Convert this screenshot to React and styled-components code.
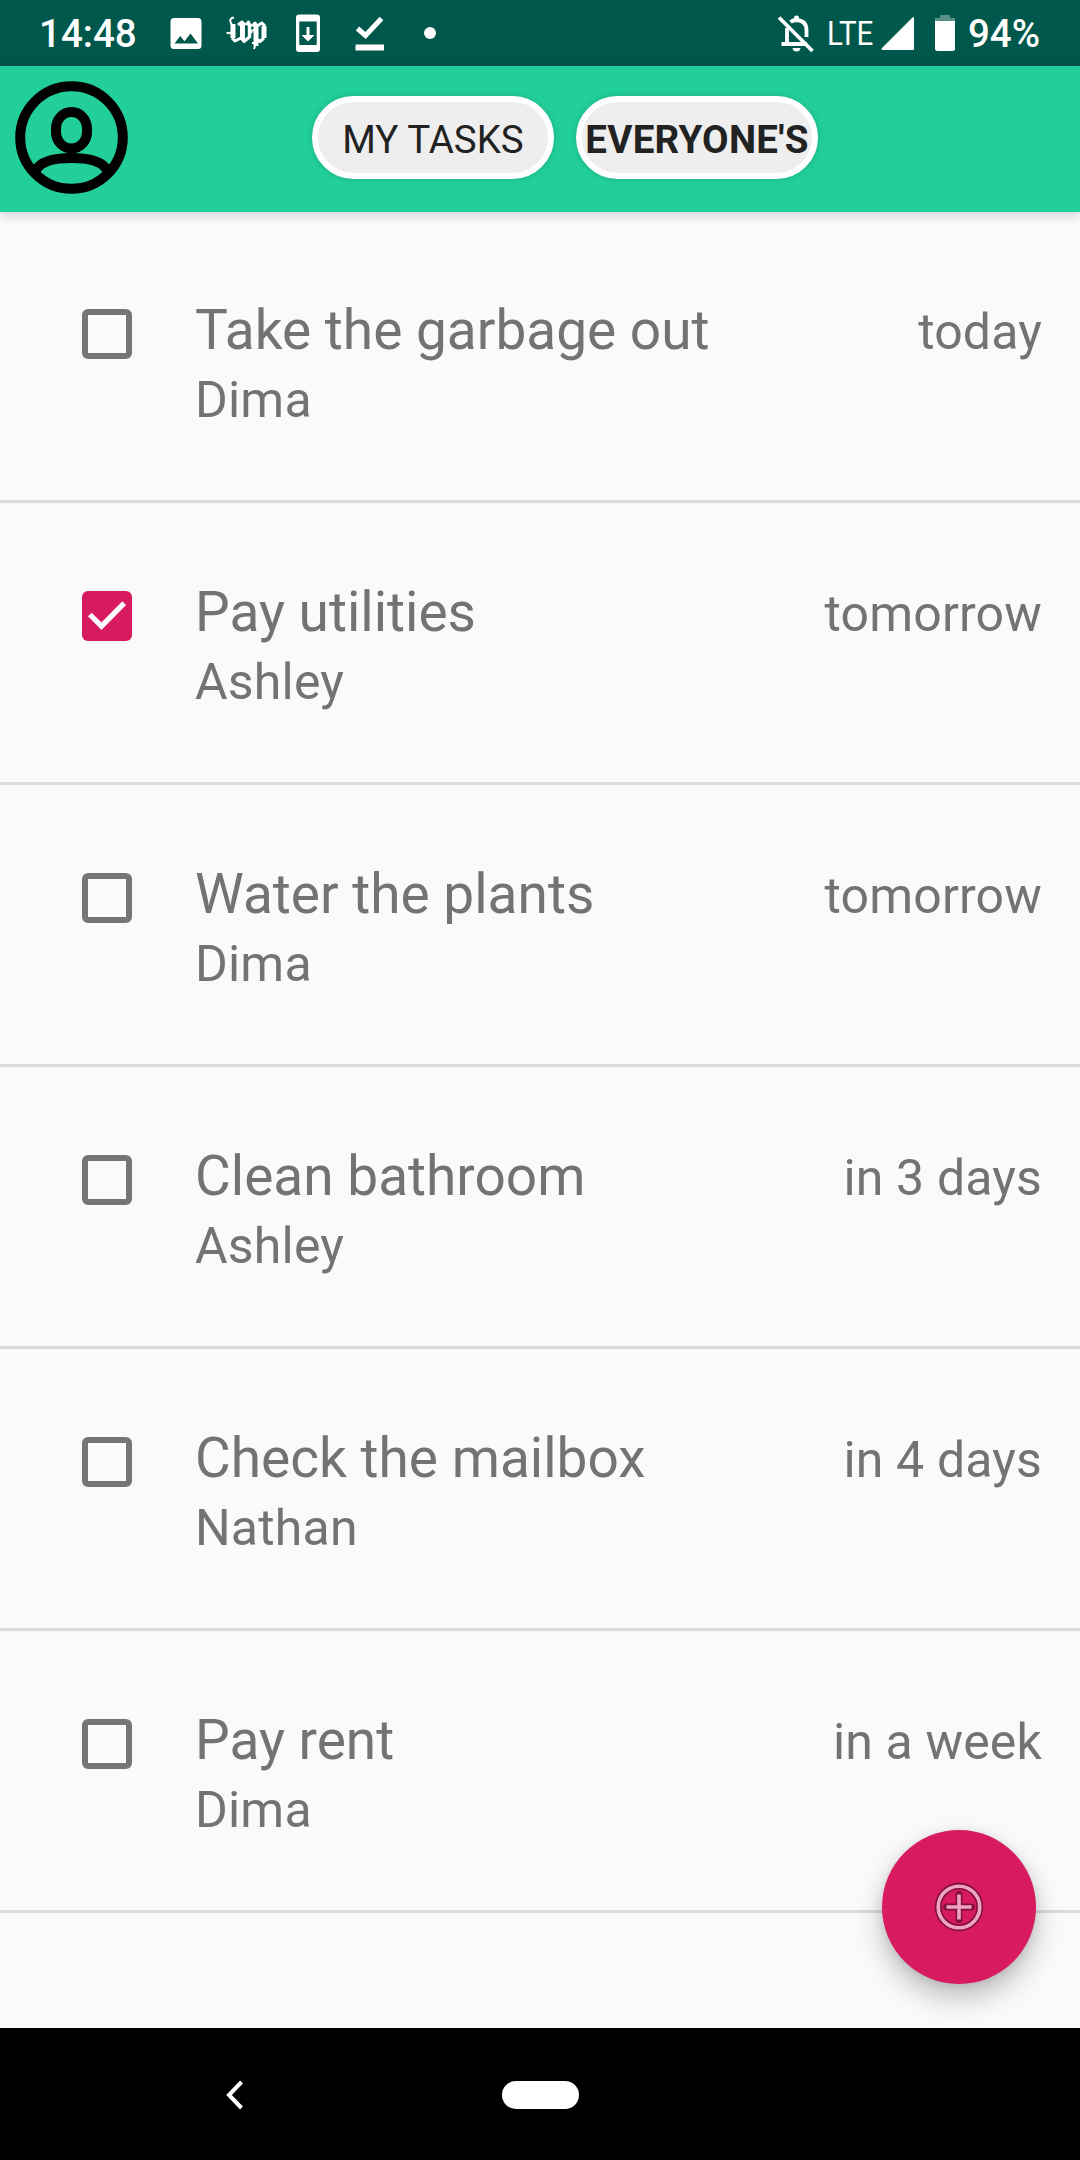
import React from "react";
import styled, { createGlobalStyle, css } from "styled-components";

const GlobalStyle = createGlobalStyle`
  *, *::before, *::after { box-sizing: border-box; }
  body { margin: 0; background: #fafafa; }
  button { font: inherit; padding: 0; border: 0; background: none; }
`;

const Screen = styled.div`
  position: relative;
  display: flex;
  flex-direction: column;
  width: 1080px;
  height: 2160px;
  overflow: hidden;
  background: #fafafa;
  color: #737373;
  font-family: Roboto, "Liberation Sans", sans-serif;
`;

const StatusBar = styled.div`
  display: flex;
  align-items: center;
  flex: none;
  height: 66px;
  padding: 0 40px 0 39px;
  background: #00574b;
  color: #fff;
`;

const StatusText = styled.span`
  font-size: 38.5px;
  line-height: 66px;
  font-weight: 500;
  padding-top: 2px;
  margin-left: ${(p) => p.$gap || 0}px;
`;

const NetworkLabel = styled.span`
  width: 47px;
  font-size: 34px;
  line-height: 66px;
  margin-left: 12px;
  transform: scaleX(0.87);
  transform-origin: left;
`;

const StatusIcon = styled.svg`
  display: block;
  flex: none;
  width: ${(p) => p.$w}px;
  height: 66px;
  margin-left: ${(p) => p.$gap || 0}px;
`;

const StatusGroup = styled.div`
  display: flex;
  align-items: center;
  margin-left: ${(p) => (p.$end ? "auto" : "0")};
`;

const Header = styled.header`
  display: flex;
  align-items: center;
  flex: none;
  height: 146px;
  padding: 0 15px 3px;
  background: #22cf9a;
  box-shadow: 0 3px 11px rgba(0, 0, 0, 0.18);
  z-index: 1;
`;

const Avatar = styled.button`
  width: 113px;
  height: 113px;
  svg { display: block; }
`;

const Filters = styled.nav`
  display: flex;
  gap: 22px;
  margin-left: 184px;
`;

const FilterButton = styled.button`
  && {
    display: flex;
    justify-content: center;
    align-items: center;
    width: 242px;
    height: 83px;
    padding-top: 3px;
    border: 6px solid #fff;
    border-radius: 42px;
    background: #eee;
    color: #222;
    font-size: 38.5px;
    font-weight: ${(p) => (p.$active ? 700 : 400)};
    letter-spacing: ${(p) => (p.$active ? 0.25 : 0)}px;
    white-space: nowrap;
    box-shadow: 0 0 7px rgba(0, 0, 0, 0.16);
  }
`;

const TaskList = styled.ul`
  flex: 1;
  margin: 0;
  padding: 9px 0 0;
  list-style: none;
`;

const TaskRow = styled.li`
  display: flex;
  align-items: flex-start;
  height: 282px;
  padding: 0 38px 0 82px;
  border-bottom: 3px solid #dadada;
`;

const CheckBox = styled.span`
  display: block;
  flex: none;
  width: 50px;
  height: 50px;
  margin-top: 88px;
  border-radius: 6px;
  ${(p) =>
    p.$checked
      ? css`background: #d81b60;`
      : css`border: 6px solid #757575;`}
  svg { display: block; }
`;

const TaskText = styled.div`
  flex: 1;
  display: flex;
  flex-direction: column;
  margin: 74px 0 0 63px;
`;

const Title = styled.span`
  font-size: 55px;
  line-height: 70px;
`;

const Assignee = styled.span`
  font-size: 50px;
  line-height: 70px;
  letter-spacing: 0.2px;
`;

const Due = styled.span`
  margin-top: 76px;
  font-size: 50px;
  line-height: 70px;
  letter-spacing: 0.15px;
  white-space: nowrap;
`;

const AddButton = styled.button`
  && {
    position: absolute;
    left: 882px;
    top: 1830px;
    width: 154px;
    height: 154px;
    border-radius: 50%;
    background: #d81b60;
    box-shadow: 0 14px 28px rgba(0, 0, 0, 0.24), 0 2px 10px rgba(0, 0, 0, 0.1);
  }
  svg { display: block; margin: auto; }
`;

const NavBar = styled.div`
  display: flex;
  align-items: center;
  flex: none;
  height: 132px;
  padding: 1px 0 0 226px;
  background: #000;
  z-index: 2;
`;

const HomePill = styled.span`
  width: 77px;
  height: 28px;
  margin-left: 258px;
  border-radius: 14px;
  background: #fff;
`;

const tasks = [
  { title: "Take the garbage out", who: "Dima", due: "today" },
  { title: "Pay utilities", who: "Ashley", due: "tomorrow", done: true },
  { title: "Water the plants", who: "Dima", due: "tomorrow" },
  { title: "Clean bathroom", who: "Ashley", due: "in 3 days" },
  { title: "Check the mailbox", who: "Nathan", due: "in 4 days" },
  { title: "Pay rent", who: "Dima", due: "in a week" },
];

const ImageIcon = () => (
  <StatusIcon $w={32} $gap={33} viewBox="0 0 32 66" fill="#fff">
    <path fillRule="evenodd" d="M4 18H28Q31.500 18 31.500 21.500V45.500Q31.500 49 28 49H4Q.5 49 .5 45.500V21.500Q.5 18 4 18ZM4.500 43.500H28L20.500 33.500L14.500 41.300L10.200 36Z" />
  </StatusIcon>
);

const PostIcon = () => (
  <StatusIcon $w={42} $gap={24} viewBox="0 0 42 66" fill="none" stroke="#fff" strokeLinejoin="round">
    <path strokeWidth="5" d="M7 24V38M16.500 24V39M30 25V46M38 26V38" />
    <path strokeWidth="3.400" d="M23.500 25V38" />
    <path strokeWidth="3" d="M6 38L9 41L15 38L18 41.500L23.500 37M12 25L16 22L19 25M20 25L22.500 22L24.500 27M29 38L34 41.500L38 38M26 26L29 23L31 26L36 23L39 26" />
    <path strokeWidth="2" d="M1 32Q2 35 7 31M7 26Q2 20 6 18L8 17.500M26 33L24 31L29 30M26 43H30L28 49" />
  </StatusIcon>
);

const UpdateIcon = () => (
  <StatusIcon $w={24} $gap={28} viewBox="0 0 24 66" fill="#fff">
    <path fillRule="evenodd" d="M3 14.500H21Q24 14.500 24 17.500V49Q24 52 21 52H3Q0 52 0 49V17.500Q0 14.500 3 14.500ZM3.300 21.500V45H20.700V21.500Z" />
    <path d="M10.500 27H13.500V35H18.500L12 41.500L5.500 35H10.500Z" />
  </StatusIcon>
);

const DoneIcon = () => (
  <StatusIcon $w={30} $gap={35} viewBox="0 0 30 66">
    <path d="M2.500 28.500L10.500 35.500L26.500 18.500" fill="none" stroke="#fff" strokeWidth="5" />
    <path d="M.5 44.500H29V50.500H.5Z" fill="#fff" />
  </StatusIcon>
);

const MutedBell = () => (
  <StatusIcon $w={38} viewBox="0 0 38 66" fill="none" stroke="#fff">
    <path strokeWidth="3.800" d="M10 28V43.500M4.500 44H30M29.500 37V30Q29.500 21 20 20Q16 20 13.500 22" />
    <path strokeWidth="3.800" d="M2 17.500L35.500 51" />
    <path fill="#fff" stroke="none" d="M17 20V18Q17 15.500 19.500 15.500T22 18V21ZM15.500 48H23.500Q23 51.500 19.500 51.500T15.500 48Z" />
  </StatusIcon>
);

const AccountIcon = () => (
  <svg width="113" height="113" viewBox="0 0 113 113" fill="none" stroke="#000" strokeWidth="10">
    <circle cx="56.500" cy="56.500" r="51.300" />
    <rect x="41" y="31" width="31" height="36.500" rx="15.500" ry="16.500" />
    <path d="M21 89C26 80 40 77 56.500 77S87 80 92 89" />
  </svg>
);

const CheckMark = () => (
  <svg width="50" height="50" viewBox="0 0 50 50">
    <path d="M7.800 23.500L19.500 35.200L42.200 12.200" fill="none" stroke="#fafafa" strokeWidth="5.200" />
  </svg>
);

const plusRing = (
  <>
    <circle cx="25" cy="25" r="20.800" />
    <path d="M12.500 25H37.500M25 12.500V37.500" />
  </>
);

const AddIcon = () => (
  <svg width="50" height="50" viewBox="0 0 50 50" fill="none">
    <g stroke="#82103f" strokeWidth="6.800" strokeLinecap="round">{plusRing}</g>
    <g stroke="#efa4bf" strokeWidth="3.600">{plusRing}</g>
  </svg>
);

export default function App() {
  return (
    <Screen>
      <GlobalStyle />
      <StatusBar>
        <StatusText>14:48</StatusText>
        <StatusGroup>
          <ImageIcon />
          <PostIcon />
          <UpdateIcon />
          <DoneIcon />
          <StatusIcon $w={12} $gap={39} viewBox="0 0 12 66">
            <circle cx="6" cy="33" r="6" fill="#fff" />
          </StatusIcon>
        </StatusGroup>
        <StatusGroup $end>
          <MutedBell />
          <NetworkLabel>LTE</NetworkLabel>
          <StatusIcon $w={33} $gap={7} viewBox="0 0 33 66">
            <path d="M33 18V49Q33 50 32 50H1Q0 49 1 48L31.500 17.500Q33 16.500 33 18Z" fill="#fff" />
          </StatusIcon>
          <StatusIcon $w={20} $gap={21} viewBox="0 0 20 66" fill="#fff">
            <path d="M5 15H15V18H20V21H0V18H5Z" opacity=".35" />
            <path d="M0 21H20V48.500Q20 51 17.500 51H2.500Q0 51 0 48.500Z" />
          </StatusIcon>
          <StatusText $gap={13}>94%</StatusText>
        </StatusGroup>
      </StatusBar>
      <Header>
        <Avatar aria-label="Account"><AccountIcon /></Avatar>
        <Filters>
          <FilterButton>MY TASKS</FilterButton>
          <FilterButton $active>EVERYONE'S</FilterButton>
        </Filters>
      </Header>
      <TaskList>
        {tasks.map((t) => (
          <TaskRow key={t.title}>
            <CheckBox role="checkbox" aria-checked={!!t.done} $checked={t.done}>
              {t.done && <CheckMark />}
            </CheckBox>
            <TaskText>
              <Title>{t.title}</Title>
              <Assignee>{t.who}</Assignee>
            </TaskText>
            <Due>{t.due}</Due>
          </TaskRow>
        ))}
      </TaskList>
      <AddButton aria-label="Add task"><AddIcon /></AddButton>
      <NavBar>
        <svg width="18" height="30" viewBox="0 0 18 30">
          <path d="M15.500 2L3 15L15.500 28" fill="none" stroke="#fff" strokeWidth="4" />
        </svg>
        <HomePill />
      </NavBar>
    </Screen>
  );
}
